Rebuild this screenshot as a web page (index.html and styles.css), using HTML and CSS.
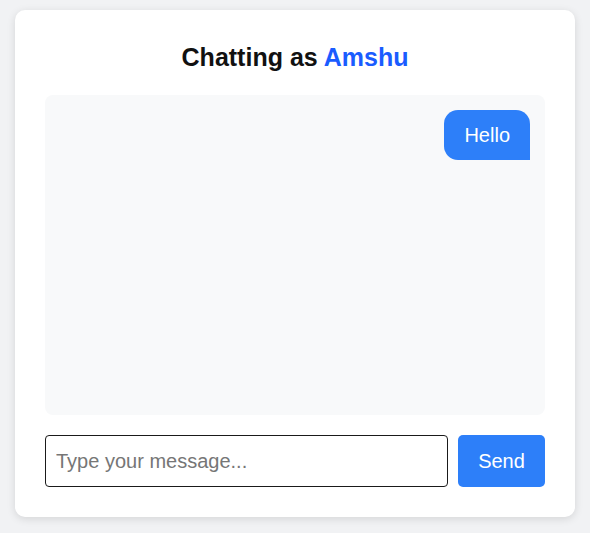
FILE: index.html
```html
<!DOCTYPE html>
<html lang="en">
<head>
<meta charset="utf-8">
<title>Chat</title>
<link rel="stylesheet" href="styles.css">
</head>
<body>
  <div class="card">
    <h2 class="title">Chatting as <span class="user">Amshu</span></h2>
    <div class="messages">
      <div class="bubble">Hello</div>
    </div>
    <form class="composer">
      <input class="field" type="text" placeholder="Type your message...">
      <button class="send" type="button">Send</button>
    </form>
  </div>
</body>
</html>
```
FILE: styles.css
```css
html, body {
  margin: 0;
  background: #f1f2f4;
  font-family: "Liberation Sans", Arial, sans-serif;
}
body {
  padding: 10px 15px 16px;
}
.card {
  background: #ffffff;
  border-radius: 10px;
  box-shadow: 0 2px 8px rgba(0, 0, 0, 0.12);
  padding: 30px;
}
.title {
  margin: 4px 0 24px;
  font-size: 25px;
  font-weight: bold;
  text-align: center;
  color: #111111;
  line-height: 27px;
}
.user {
  color: #1a5cff;
}
.messages {
  height: 290px;
  background: #f8f9fa;
  border-radius: 8px;
  padding: 15px;
  display: flex;
  flex-direction: column;
  align-items: flex-end;
}
.bubble {
  background: #2d7ff9;
  color: #ffffff;
  font-size: 20px;
  line-height: 30px;
  padding: 10px 20px;
  border-radius: 14px 14px 0 14px;
}
.composer {
  margin: 20px 0 0;
  display: flex;
  gap: 10px;
}
.field {
  flex: 1;
  min-width: 0;
  height: 52px;
  box-sizing: border-box;
  border: 1px solid #1a1a1a;
  border-radius: 4px;
  padding: 0 10px;
  font-family: "Liberation Sans", Arial, sans-serif;
  font-size: 20px;
  color: #222;
  background: #fff;
}
.field::placeholder {
  color: #767676;
}
.send {
  width: 87px;
  height: 52px;
  border: none;
  border-radius: 5px;
  background: #2d7ff9;
  color: #ffffff;
  font-family: "Liberation Sans", Arial, sans-serif;
  font-size: 20px;
}
```
